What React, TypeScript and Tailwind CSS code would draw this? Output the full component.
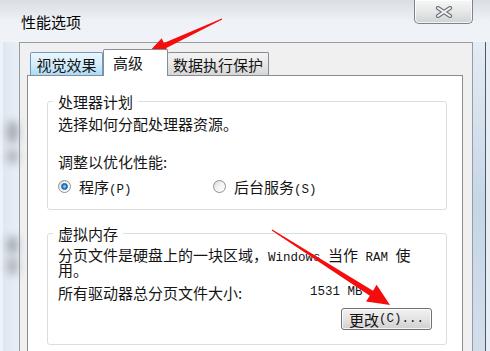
const mono = "font-['Liberation_Mono',monospace] text-[12.5px] leading-[8px]"

function Radio({ checked }: { checked?: boolean }) {
  return (
    <span className="flex h-[13px] w-[13px] shrink-0 items-center justify-center rounded-full border border-[#8e8f8f] bg-linear-to-br from-[#dcdcdc] via-[#f4f4f4] to-[#ffffff]">
      {checked && (
        <span className="h-[7px] w-[7px] rounded-full border border-[#1b5b95] bg-radial from-[#9fdcff] via-[#2b8ad6] to-[#1c5fa0]" />
      )}
    </span>
  )
}

function GroupBox({ title, className, children }: { title: string; className?: string; children: React.ReactNode }) {
  return (
    <fieldset className={"w-[400px] rounded-[3px] border border-[#d5dfe5] pl-[10px] pr-[14px] " + (className ?? "")}>
      <legend className="-ml-[5px] px-[5px] leading-[15px]">{title}</legend>
      {children}
    </fieldset>
  )
}

function Arrows() {
  return (
    <svg className="pointer-events-none absolute inset-0" width="490" height="351" viewBox="0 0 490 351">
      <polygon
        fill="#f50d0d"
        points="221.8,18.5 163.9,43.0 161.7,38.3 147,54 168.5,52.7 166.3,48.0 222.2,19.5"
      />
      <polygon
        fill="#f50d0d"
        points="272.3,229.5 373.0,290.7 376.6,284.8 390,305 366.0,301.6 369.8,295.7 271.7,230.5"
      />
    </svg>
  )
}

export default function App() {
  return (
    <div className="relative flex h-[351px] w-[490px] flex-col overflow-hidden bg-[#e9f0f7] font-['Noto_Sans_CJK_SC','Noto_Sans',sans-serif] text-[15px] leading-[15px] text-[#141414]">
      {/* title bar */}
      <div className="flex h-[42px] shrink-0 items-start justify-between bg-linear-to-b from-[#d9dee3] via-[#eef2f6] to-[#f0f4f8]">
        <span className="ml-[21px] mt-[14px] text-black">性能选项</span>
        <div className="mr-[17px] flex h-[24px] w-[59px] items-center justify-center rounded-b-[5px] border border-t-0 border-[#7d838a] bg-linear-to-b from-[#f7f7f7] via-[#e6e7e8] to-[#d0d3d6] shadow-[inset_0_0_0_1px_rgba(255,255,255,0.75)]">
          <svg width="18" height="12" viewBox="0 0 18 12">
            <path d="M3 2 L15 10 M15 2 L3 10" stroke="#6e7378" strokeWidth="4.2" strokeLinecap="round" />
            <path d="M3 2 L15 10 M15 2 L3 10" stroke="#f4f4f4" strokeWidth="2" strokeLinecap="round" />
          </svg>
        </div>
      </div>

      <div className="flex flex-1">
        {/* left glass frame */}
        <div className="flex w-[19px] shrink-0 flex-col border-l-[3px] border-[#edf3f9] bg-linear-to-r from-[#dfe7f0] to-[#e9eff6]">
          <div className="ml-[4px] mt-[79px] h-[22px] w-[11px] rounded-full bg-[#a3a9b0] blur-[4px]" />
          <div className="ml-[4px] mt-[6px] h-[15px] w-[11px] rounded-full bg-[#adb2b8] blur-[4px]" />
          <div className="ml-[4px] mt-[72px] h-[18px] w-[11px] rounded-full bg-[#a3a9b0] blur-[4px]" />
          <div className="ml-[4px] mt-[3px] h-[18px] w-[11px] rounded-full bg-[#adb2b8] blur-[4px]" />
        </div>

        {/* dialog client area */}
        <div className="flex w-[454px] shrink-0 flex-col border-x border-t border-[#979ca3] bg-[#f0f0f0] pl-[7px] pr-[9px] pt-[6px]">
          <div className="ml-[3px] flex h-[26px] items-end">
            <div className="flex h-[23px] w-[73px] items-center justify-center rounded-t-[2px] border border-b-0 border-[#6f98bf] bg-linear-to-b from-[#eaf6fd] via-[#d5eefc] to-[#abdaf5]">
              视觉效果
            </div>
            <div className="relative z-10 -mb-px flex h-[27px] w-[65px] items-center rounded-t-[2px] border border-b-0 border-[#898c95] bg-white pb-[2px] pl-[9px]">
              高级
            </div>
            <div className="flex h-[23px] w-[101px] items-center justify-center rounded-t-[2px] border border-b-0 border-l-0 border-[#898c95] bg-linear-to-b from-[#f3f3f3] via-[#e8e8e8] to-[#d6d6d6]">
              数据执行保护
            </div>
          </div>

          <div className="flex-1 border border-[#898c95] bg-white pl-[19px] pt-[18px]">
            <GroupBox title="处理器计划" className="pb-[15px] pt-[7px]">
              <p>选择如何分配处理器资源。</p>
              <p className="mt-[23px]">调整以优化性能:</p>
              <div className="mt-[10px] grid h-[15px] grid-cols-[155px_auto]">
                <label className="flex h-[15px] items-center gap-[8px]">
                  <Radio checked />
                  <span>
                    程序<span className={mono}>(P)</span>
                  </span>
                </label>
                <label className="flex h-[15px] items-center gap-[8px]">
                  <Radio />
                  <span>
                    后台服务<span className={mono}>(S)</span>
                  </span>
                </label>
              </div>
            </GroupBox>

            <GroupBox title="虚拟内存" className="mt-[16px] pb-[14px] pt-[6px]">
              <p>
                分页文件是硬盘上的一块区域，<span className={mono}>Windows </span>当作<span className={mono}> RAM </span>使用。
              </p>
              <div className="mt-[8px] flex h-[15px]">
                <span className="w-[252px]">所有驱动器总分页文件大小:</span>
                <span className={mono + " leading-[15px]"}>1531 MB</span>
              </div>
              <div className="mt-[8px] flex justify-end">
                <button className="flex h-[22px] w-[91px] items-center justify-center rounded-[3px] border border-[#707070] bg-linear-to-b from-[#f2f2f2] via-[#e4e4e4] to-[#cfcfcf] shadow-[inset_0_0_0_1px_rgba(255,255,255,0.8)]">
                  更改<span className={mono}>(C)...</span>
                </button>
              </div>
            </GroupBox>
            <div className="h-[20px]" />
          </div>
        </div>

        {/* right glass frame */}
        <div className="flex w-[17px] shrink-0">
          <div className="w-[12px] bg-linear-to-b from-[#e4ecf4] via-[#c6d6e7] to-[#d3dfeb]" />
          <div className="w-px bg-[#4f5863]" />
          <div className="flex-1 bg-[#e6edf4]" />
        </div>
      </div>

      <Arrows />
    </div>
  )
}
